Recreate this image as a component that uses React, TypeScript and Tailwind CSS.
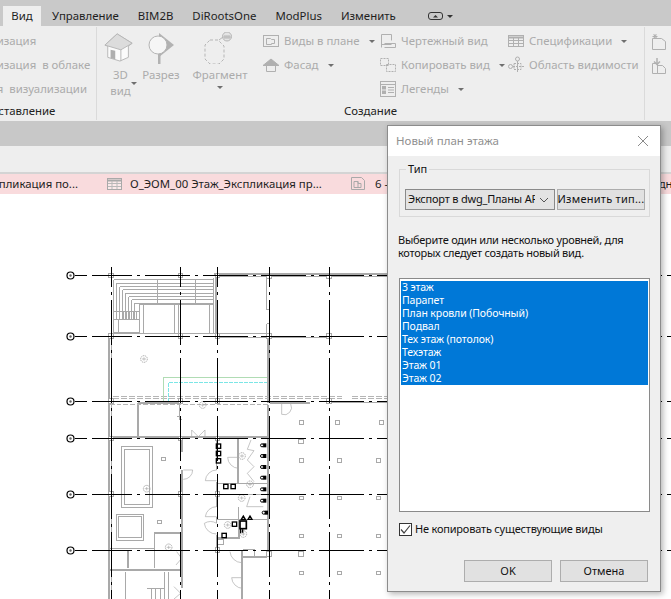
import React from "react";

const G = "#a9a9a9";

function Caret({ className = "" }: { className?: string }) {
  return <span className={"inline-block w-0 h-0 border-x-[3px] border-x-transparent border-t-[3px] border-t-[#6f6f6f] " + className} />;
}

function SmallIcon({ kind }: { kind: string }) {
  const s = { fill: "none", stroke: "#b0b0b0", strokeWidth: 1 };
  return (
    <svg width="18" height="18" viewBox="0 0 18 18" className="shrink-0">
      {kind === "plan" && <g {...s}><rect x="1.5" y="3.5" width="15" height="11" /><path d="M4.5 6.5h4l1 1h3v4h-3v1h-5z" /></g>}
      {kind === "elev" && <g {...s}><path d="M1 9.5 9 3l8 6.5z" fill="#b0b0b0" /><path d="M4.5 9.5v6h9v-6" /></g>}
      {kind === "draft" && <g {...s}><path d="M2.5 15.5v-13h10v6M2.5 12.5h10" /><path d="M5.5 11.5h11v4h-11" /></g>}
      {kind === "copy" && <g {...s} strokeDasharray="2 1"><rect x="1.5" y="2.5" width="8" height="7" /><rect x="7.5" y="8.5" width="9" height="7" /></g>}
      {kind === "legend" && <g {...s}><rect x="1.5" y="1.5" width="15" height="15" /><path d="M2 4.5h14M9 7.5h6M9 10h6M9 12.5h6" /><rect x="3.5" y="6.5" width="3" height="2.5" fill="#b0b0b0" /><rect x="3.5" y="11" width="3" height="2.5" fill="#b0b0b0" /></g>}
      {kind === "table" && <g {...s}><rect x="1.5" y="3.5" width="15" height="11" /><path d="M2 5.5h14" strokeWidth="2" /><path d="M2 8.5h14M2 11.5h14M6.5 6v8M11.5 6v8" /></g>}
      {kind === "scope" && <g {...s}><circle cx="3.5" cy="10.5" r="2" /><circle cx="10.5" cy="3" r="2" /><path d="M10.5 5v12M6 10.5h11" strokeDasharray="2 1" /><path d="M7 7.5h7v6H7z" strokeDasharray="2 1" /></g>}
      {kind === "sheet" && <g {...s}><path d="M1.5 16.5v-11h9l4 3v8z" /><path d="M4 1v5M1.5 3.5h5M2.5 1.5l3.500 4M5.500 1.500l-3 4" /></g>}
      {kind === "dup" && <g {...s}><path d="M1.500 16.500v-10h5v10zM6.500 16.500v-8h5l3 3v5z" /><path d="M6 1v6M3 4.500l3 3 3-3" strokeWidth="1.500" /></g>}
    </svg>
  );
}

function RibbonRow({ icon, label, caret }: { icon?: string; label: string; caret?: boolean }) {
  return (
    <div className="h-6 shrink-0 flex items-center whitespace-nowrap gap-[4px]">
      {icon ? <SmallIcon kind={icon} /> : <span className="w-[18px]" />}
      <span>{label}</span>
      {caret && <Caret className="ml-[5px]" />}
    </div>
  );
}

const horizontals = [275, 336, 401, 438, 494, 550];
const verticals = [111, 180, 217, 269, 329];
const smallSquares = [[755,518],[863,518],[994,518],[754,632],[870,632],[987,632],[754,745],[870,745],[987,745],[754,858],[870,858],[987,858],[754,970],[870,970],[987,970],[342,628],[330,817]];
const largeSquares = [[753,575],[753,912]];
const columns = [[183,77],[392,77],[503,77],[657,80],[838,80],[183,258],[392,258],[503,258],[657,258],[838,258],[183,454],[392,454],[503,454],[838,454],[183,566],[392,566],[503,566],[183,733],[392,733],[503,733],[503,901],[657,912]];
const lamps = [[282,327],[458,465],[290,716],[356,892],[576,618],[575,744],[533,825],[580,852],[600,703]];
const toilets = [[640,586],[640,618],[640,651],[640,683],[640,718],[640,752],[645,788]];
const sinks = [[505,588],[505,610],[505,632],[527,709],[549,709],[522,856],[553,822]];

function Plan() {
  const wallThick = { stroke: G, fill: "none" };
  const walls: [string, number][] = [
    ["M492 72H1015", 6], ["M505 80H1015", 3], ["M497 72V250", 6], ["M490 85V250", 3],
    ["M175 252H660", 3], ["M505 263H655", 3], ["M660 264H838", 3],
    ["M177 252V1047", 6], ["M185 260V1047", 3],
    ["M654 262V458", 6], ["M655 465V900", 6], ["M650 80V180H660", 3], ["M650 250V222H660", 3],
    ["M265 458H390", 6], ["M265 458V560", 6], ["M180 562H650", 6], ["M660 458H780", 6], ["M845 458H1015", 3], ["M660 264V458", 3],
    ["M390 465V510H397", 3], ["M380 500H390", 3],
    ["M397 565V605", 6], ["M397 660V1015", 6], ["M500 565V660", 3], ["M500 695V770", 3], ["M500 800V820", 3], ["M500 855V900", 3],
    ["M565 565V700", 6], ["M500 702H650", 3], ["M500 735H650", 3], ["M500 808H650", 3], ["M565 770V810", 3], ["M568 810V860", 6],
    ["M500 865H570", 6], ["M575 900V1047", 6], ["M578 920H650", 6], ["M500 903H540", 3], ["M580 900H615V920", 3],
    ["M503 868H520V885H503", 3],
    ["M313 850H392", 6], ["M315 850V955", 3], ["M180 895H315", 3], ["M180 961H397", 6], ["M234 900V955", 6],
    ["M226 965V1047", 3], ["M345 965V1047", 3], ["M355 965V1047", 3], ["M290 1016H345", 3], ["M305 1016V1047M318 1016V1047M331 1016V1047", 3],
    ["M268 165H490", 3], ["M270 165V250", 3], ["M281 165V250", 3], ["M373 165V250", 3], ["M385 165V250", 3], ["M480 165V250", 3], ["M490 165V250", 3],
    ["M192 210H268", 3], ["M205 210V250", 3], ["M192 210V250", 3], ["M192 247H268", 3],
    ["M200 185V208M210 185V208M220 185V208M230 185V208M240 185V208M250 185V208M260 185V208", 3],
    ["M192 185H268", 3], ["M322 90V160M437 90V160", 3],
  ];
  return (
    <svg viewBox="0 194 671 405" className="block w-[671px] h-[405px]">
      <g transform="translate(50 250) scale(0.33333)" shapeRendering="crispEdges">
        {[0,1,2,3,4,5,6,7].map(i => (
          <path key={i} d={`M${192 + i * 9} 210V${90 + i * 10}H490`} stroke={G} strokeWidth="3" fill="none" />
        ))}
        {walls.map(([d, w], i) => <path key={i} d={d} strokeWidth={w} {...wallThick} />)}
        <path d="M190 440H875M190 446H875M905 440H1015M905 446H1015" stroke="#b5b5b5" strokeWidth="3" strokeDasharray="18 6" fill="none" />
        <path d="M180 463H655" stroke="#b5b5b5" strokeWidth="3" strokeDasharray="14 6" fill="none" />
        <path d="M340 455V382H650" stroke="#b0dcb4" strokeWidth="3" fill="none" />
        <path d="M355 455V397H650" stroke="#7be6e6" strokeWidth="3" strokeDasharray="12 3" fill="none" />
        <rect x="214" y="589" width="94" height="183" stroke={G} strokeWidth="3" fill="none" />
        <rect x="224" y="598" width="74" height="165" stroke={G} strokeWidth="3" fill="none" />
        <rect x="199" y="794" width="82" height="77" stroke={G} strokeWidth="3" fill="none" />
        <rect x="206" y="800" width="68" height="64" stroke={G} strokeWidth="3" fill="none" />
        {smallSquares.map(([x, y], i) => <rect key={i} x={x - 6} y={y - 5} width="12" height="10" fill="white" stroke={G} strokeWidth="3" />)}
        {largeSquares.map(([x, y], i) => <rect key={i} x={x - 8} y={y - 7} width="15" height="14" fill="white" stroke={G} strokeWidth="3" />)}
        {columns.map(([x, y], i) => <rect key={i} x={x - 7} y={y - 7} width="14" height="14" fill="white" stroke={G} strokeWidth="3" />)}
      </g>
      <g transform="translate(50 250) scale(0.33333)" fill="none">
        <path d="M695 460V493A22 22 0 0 0 722 462" stroke={G} strokeWidth="2" />
        <path d="M400 688A28 28 0 0 0 428 660H400M500 660A34 34 0 0 0 466 692H500M533 622H565M533 622A34 34 0 0 0 566 655M500 770A34 34 0 0 0 466 800H500M500 820A36 36 0 0 0 463 820A36 36 0 0 0 500 852M540 905A36 36 0 0 0 575 938M578 983H545A34 34 0 0 0 578 1015M425 540 445 560 465 540V562M425 540V562M380 905 395 925 378 945M372 1010 392 1030 372 1047M603 570 592 598 612 602 592 630 612 650 592 670 612 695M600 740 590 770 640 770" stroke={G} strokeWidth="2" />
        {lamps.map(([x, y], i) => <g key={i}><circle cx={x} cy={y} r="10" stroke={G} strokeWidth="3" strokeDasharray="4 2" /><path d={`M${x - 6} ${y}h12M${x} ${y - 5}v10`} stroke={G} strokeWidth="2" /></g>)}
        {toilets.map(([x, y], i) => <g key={i}><rect x={x - 2} y={y - 6} width="11" height="12" fill="black" /><circle cx={x - 4} cy={y} r="4.500" stroke="black" strokeWidth="3" fill="white" /></g>)}
        {sinks.map(([x, y], i) => <rect key={i} x={x - 6} y={y - 6} width="13" height="13" fill="white" stroke="black" strokeWidth="4" />)}
        <rect x="570" y="813" width="19" height="23" fill="white" stroke="black" strokeWidth="5" />
        <path d="M572 836V850M578 838V848" stroke="black" strokeWidth="4" />
        <path d="M574 808 580 798 586 808zM594 808 600 798 606 808z" fill="white" stroke="black" strokeWidth="4" />
      </g>
      <g stroke="black" fill="none" shapeRendering="crispEdges">
        {horizontals.map(y => <g key={y}><path d={`M75 ${y + 0.5}H87`} /><path d={`M92 ${y + 0.5}H671`} strokeDasharray="45 5 3 5" strokeDashoffset="5" /></g>)}
        {verticals.map(x => <path key={x} d={`M${x + 0.5} 267V599`} strokeDasharray="45 5 3 5" strokeDashoffset="25" />)}
      </g>
      <g fill="white" stroke="black" strokeWidth="1.200">
        {horizontals.map(y => <g key={y}><circle cx="70.500" cy={y + 0.500} r="3.500" /><circle cx="70.500" cy={y + 0.500} r="1.200" fill="#666" stroke="none" /></g>)}
      </g>
    </svg>
  );
}

function Dialog() {
  const levels = ["3 этаж", "Парапет", "План кровли (Побочный)", "Подвал", "Тех этаж (потолок)", "Техэтаж", "Этаж 01", "Этаж 02"];
  return (
    <div className="absolute left-[387px] top-[125px] w-[274px] h-[467px] bg-[#efefef] border border-[#8c8c8c] shadow-[2px_2px_6px_rgba(0,0,0,0.3)] flex flex-col text-[11px] text-[#111] font-['Noto_Sans',sans-serif]">
      <div className="h-[30px] bg-white flex items-center justify-between pl-[8px] pr-[11px] shrink-0">
        <span className="text-[#8f8f8f] text-[11.500px]">Новый план этажа</span>
        <svg width="12" height="12" viewBox="0 0 12 12"><path d="M1 1l10 10M11 1 1 11" stroke="#8a8a8a" fill="none" /></svg>
      </div>
      <div className="pl-[11px] pr-[10px] pt-[13px] flex flex-col flex-1">
        <div className="relative h-[48px] border border-[#d9d9d9] pl-[5px] pr-[4px] pt-[19px] flex gap-[2px]">
          <span className="absolute left-[6px] -top-[9px] bg-[#efefef] px-[2px] leading-[16px]">Тип</span>
          <div className="w-[150px] h-[21px] bg-[#e3e3e3] border border-[#8a8a8a] flex items-center pl-[2px] pr-[5px] justify-between">
            <span className="overflow-hidden whitespace-nowrap w-[127px] tracking-[-0.2px]">Экспорт в dwg_Планы АР</span>
            <svg width="10" height="6" viewBox="0 0 10 6"><path d="M1 1l4 4 4-4" stroke="#555" fill="none" /></svg>
          </div>
          <div className="w-[88px] h-[21px] bg-[#e1e1e1] border border-[#adadad] flex items-center justify-center whitespace-nowrap tracking-[0.25px]">Изменить тип...</div>
        </div>
        <p className="mt-[16px] -ml-[1px] leading-[13px] whitespace-nowrap tracking-[-0.27px]">Выберите один или несколько уровней, для<br />которых следует создать новый вид.</p>
        <div className="mt-[19px] h-[234px] bg-white border border-[#8a8a8a] p-px">
          <div className="mt-px bg-[#0078d7] text-white leading-[13px] text-[10.500px] tracking-[-0.1px]">
            {levels.map(l => <div key={l} className="h-[13px] pl-[1px] whitespace-nowrap">{l}</div>)}
          </div>
        </div>
        <div className="mt-[10px] flex items-center gap-[3px] h-[14px]">
          <span className="w-[13px] h-[13px] border border-[#333] bg-white flex items-center justify-center">
            <svg width="11" height="11" viewBox="0 0 11 11"><path d="M1 5.500 4 9l6-7.500" stroke="#444" strokeWidth="1.200" fill="none" /></svg>
          </span>
          <span className="whitespace-nowrap tracking-[-0.2px]">Не копировать существующие виды</span>
        </div>
        <div className="mt-[24px] flex justify-end gap-[8px] pr-[2px]">
          <div className="w-[88px] h-[22px] bg-[#e1e1e1] border border-[#adadad] flex items-center justify-center">OK</div>
          <div className="w-[88px] h-[22px] bg-[#e1e1e1] border border-[#adadad] flex items-center justify-center">Отмена</div>
        </div>
      </div>
    </div>
  );
}

export default function App() {
  return (
    <div className="relative w-[671px] h-[599px] overflow-hidden bg-white font-['Noto_Sans',sans-serif] text-[11.400px]">
      {/* Tab strip */}
      <div className="h-[26px] bg-[#c9c9c9] flex items-end text-[#1e1e1e] whitespace-nowrap">
        <div className="ml-[3px] w-[38px] h-[20px] bg-[#eeeeee] flex items-center justify-center">Вид</div>
        <div className="h-[20px] flex items-center">
          <span className="ml-[11px]">Управление</span>
          <span className="ml-[19px]">BIM2B</span>
          <span className="ml-[19px]">DiRootsOne</span>
          <span className="ml-[19px]">ModPlus</span>
          <span className="ml-[19px]">Изменить</span>
          <svg width="16" height="9" viewBox="0 0 16 9" className="ml-[32px]"><rect x="0.500" y="0.500" width="14" height="7" rx="2.500" fill="none" stroke="#333" /><path d="M5 5.500 7.500 3 10 5.500z" fill="#333" /></svg>
          <Caret className="ml-[3px] border-t-[#333]" />
        </div>
      </div>

      {/* Ribbon */}
      <div className="h-[95px] bg-[#eeeeee] flex text-[#ababab]">
        <div className="w-[97px] shrink-0 overflow-hidden border-r border-[#dadada] my-px flex flex-col pt-[2px] whitespace-nowrap">
          <div className="h-6 shrink-0 flex items-center -ml-[42px]">Визуализация</div>
          <div className="h-6 shrink-0 flex items-center -ml-[42px]">Визуализация&nbsp; в облаке</div>
          <div className="h-6 shrink-0 flex items-center -ml-[41px]">Галерея&nbsp; визуализации</div>
          <div className="h-[22px] shrink-0 -mt-px flex items-center -ml-[30px] text-[#222]">Представление</div>
        </div>

        <div className="w-[548px] shrink-0 border-r border-[#dadada] my-px flex flex-col">
          <div className="h-[72px] flex">
            <div className="w-[35px] pt-[5px] ml-[6px] relative flex flex-col items-center">
              <svg width="30" height="30" viewBox="0 0 32 32" className="-ml-[3px]">
                <path d="M1 14 14 2l16 10-4 3v12l-9 4-13-4V15z" fill="#fbfbfb" stroke="#b5b5b5" />
                <path d="M1 14 14 2l16 10-12 7zM18 19v12" fill="#dcdcdc" stroke="#b5b5b5" />
                <path d="M7 28V19l5 1v9z" fill="#aeaeae" />
              </svg>
              <span className="leading-[16px] mt-[5px] text-center">3D<br />вид</span>
              <Caret className="absolute left-[28px] top-[55px]" />
            </div>
            <div className="w-[46px] pt-[5px] flex flex-col items-center">
              <svg width="30" height="32" viewBox="0 0 30 32">
                <path d="M13 1 28 13 13 25z" fill="#b2b2b2" />
                <rect x="12" y="22" width="2.500" height="10" fill="#b2b2b2" />
                <circle cx="12" cy="13" r="9" fill="#f6f6f6" stroke="#b5b5b5" />
              </svg>
              <span className="leading-[16px] mt-[3px]">Разрез</span>
            </div>
            <div className="w-[60px] pt-[5px] ml-[6px] flex flex-col items-center">
              <svg width="34" height="32" viewBox="0 0 34 32" fill="none" stroke="#b5b5b5" className="-ml-[6px]">
                <path d="M10 8h8l6 6v13l-5 5h-9l-5-5V13z" strokeDasharray="3 2" />
                <path d="M19 8l4-3" />
                <circle cx="27" cy="4.500" r="4.500" fill="#e4e4e4" />
                <path d="M23 5h8M25 3v4M27 3v4M29 3v4" />
              </svg>
              <span className="leading-[16px] mt-[3px] whitespace-nowrap">Фрагмент</span>
              <Caret className="mt-[3px]" />
            </div>
            <div className="w-[117px] ml-[12px] flex flex-col mt-[2px]">
              <RibbonRow icon="plan" label="Виды в плане" caret />
              <RibbonRow icon="elev" label="Фасад" caret />
            </div>
            <div className="w-[128px] flex flex-col mt-[2px]">
              <RibbonRow icon="draft" label="Чертежный вид" />
              <RibbonRow icon="copy" label="Копировать вид" caret />
              <RibbonRow icon="legend" label="Легенды" caret />
            </div>
            <div className="flex flex-col mt-[2px]">
              <RibbonRow icon="table" label="Спецификации" caret />
              <RibbonRow icon="scope" label="Область видимости" />
            </div>
          </div>
          <div className="mt-auto h-[19px] flex items-center justify-center text-[#222]">Создание</div>
        </div>

        <div className="pl-[6px] pt-[7px] flex flex-col gap-[6px]">
          <SmallIcon kind="sheet" />
          <SmallIcon kind="dup" />
        </div>
      </div>

      {/* Grey strip + light strip */}
      <div className="h-[25px] bg-[#c8c8c8]" />
      <div className="h-[28px] bg-[#eeeeee] border-b-[2px] border-[#d4d4d4]" />

      {/* Open views */}
      <div className="h-[20px] bg-[#f9dbdd] flex items-center text-[#1e1e1e] whitespace-nowrap">
        <span className="w-[107px] overflow-hidden flex justify-end shrink-0 pr-[29px]"><span className="shrink-0">Экспликация по...</span></span>
        <svg width="16" height="13" viewBox="0 0 16 13" className="shrink-0"><rect x="0.500" y="0.500" width="14" height="11" fill="#fbe9ea" stroke="#a9a9a9" /><path d="M1 2.500h13" stroke="#a9a9a9" strokeWidth="2" /><path d="M1 5.500h13M1 8.500h13M5 3v8M10 3v8" stroke="#b9b9b9" /></svg>
        <span className="ml-[7px] w-[221px] shrink-0">О_ЭОМ_00 Этаж_Экспликация пр...</span>
        <svg width="16" height="14" viewBox="0 0 16 14" fill="none" stroke="#a9a9a9" className="shrink-0"><path d="M.5.500h10l3 3v9H.5z" /><path d="M3 4.500h4v2h3v4H3zM7 4.500v6" /></svg>
        <span className="ml-[8px] w-[277px] shrink-0">6 -</span>
        <span>одн</span>
      </div>

      {/* Drawing canvas */}
      <Plan />
      <Dialog />
    </div>
  );
}
